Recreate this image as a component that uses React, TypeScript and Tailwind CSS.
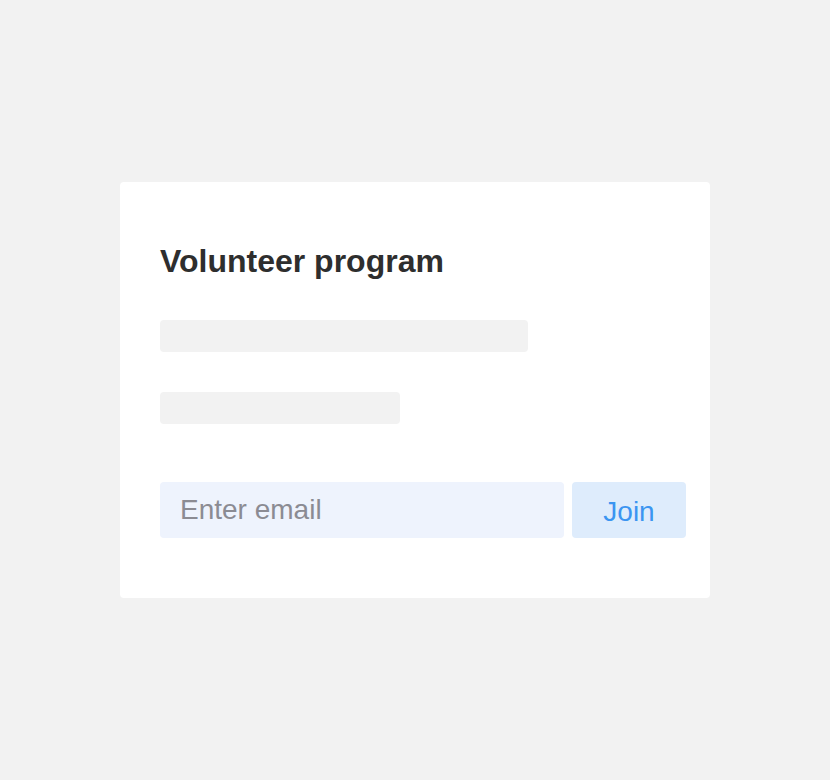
const App = () => {
  return (
    <div
      className="min-h-screen bg-[#f2f2f2] flex items-center justify-center"
      style={{ fontFamily: '"Liberation Sans", Arial, sans-serif' }}
    >
      <div className="w-[590px] h-[416px] bg-white rounded-[4px] pt-[59px] px-10">
        <h2 className="text-[32px] leading-[40px] font-bold text-[#2e2e2e]">Volunteer program</h2>
        <div className="mt-[39px] w-[368px] h-8 rounded-[4px] bg-[#f2f2f2]" />
        <div className="mt-10 w-[240px] h-8 rounded-[4px] bg-[#f2f2f2]" />
        <form className="mt-[58px] flex gap-2 w-[526px]" onSubmit={(e) => e.preventDefault()}>
          <input
            type="email"
            placeholder="Enter email"
            className="w-[404px] h-14 rounded-[4px] bg-[#eef3fd] px-5 pb-[1px] text-[28px] text-[#2e2e2e] placeholder:text-[#8b8b93] outline-none"
          />
          <button
            type="submit"
            className="w-[114px] h-14 rounded-[4px] bg-[#deecfc] pt-[3px] text-[28px] text-[#3b95f1]"
          >
            Join
          </button>
        </form>
      </div>
    </div>
  );
};

export default App;
